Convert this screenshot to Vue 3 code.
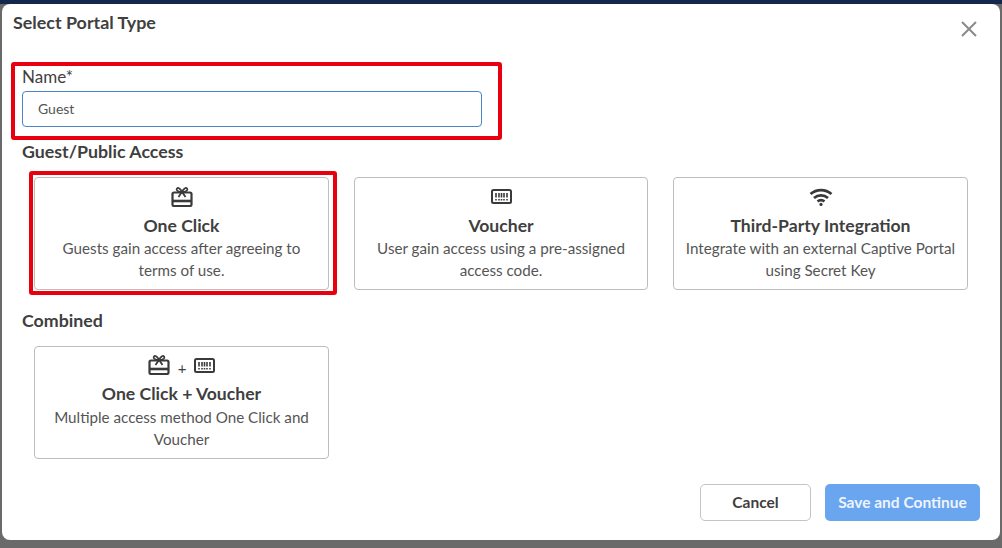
<script setup>
const access = [
  { title: 'One Click', icons: ['gift'], lines: 'Guests gain access after agreeing to terms of use.', marked: true },
  { title: 'Voucher', icons: ['keys'], lines: 'User gain access using a pre-assigned access code.' },
  { title: 'Third-Party Integration', icons: ['wifi'], lines: 'Integrate with an external Captive Portal using Secret Key' }
]
const combined = [
  { title: 'One Click + Voucher', icons: ['gift', 'keys'], lines: 'Multiple access method One Click and Voucher' }
]
const sections = [
  { name: 'Guest/Public Access', cards: access },
  { name: 'Combined', cards: combined }
]
</script>

<template>
  <div class="page">
    <div class="modal">
      <header class="head">
        <h1>Select Portal Type</h1>
        <svg class="close" width="16" height="16" viewBox="0 0 16 16"><path d="M1 1l14 14M15 1L1 15" stroke="#8a8a8a" stroke-width="2" fill="none"/></svg>
      </header>

      <div class="field">
        <label>Name*</label>
        <div class="input">Guest</div>
        <span class="mark"></span>
      </div>

      <section v-for="s in sections" :key="s.name" class="section">
        <h2>{{ s.name }}</h2>
        <div class="grid">
          <div v-for="c in s.cards" :key="c.title" class="card">
            <div class="icons" :class="{ pair: c.icons.length > 1 }">
              <template v-for="(i, n) in c.icons" :key="i">
                <span v-if="n" class="plus">+</span>
                <svg v-if="i === 'gift'" width="22" height="20" viewBox="0 0 22 20" fill="none" stroke="#3a3a3a" stroke-width="2.2">
                  <rect x="1.5" y="5.5" width="19" height="13.5" rx="1.5"/>
                  <path d="M1.5 14h19" stroke-width="2.6"/>
                  <path d="M11 5C9.5 1.5 7 0.2 6 1.5 4.8 3.2 7 5 11 5.2 15 5 17.2 3.2 16 1.5 15 0.2 12.5 1.5 11 5Z" stroke-width="1.7"/>
                  <path d="M10.5 5.5L7.5 10M11.5 5.5l3 4.5" stroke-width="1.8"/>
                </svg>
                <svg v-else-if="i === 'keys'" width="21" height="15" viewBox="0 0 21 15" fill="none" stroke="#3a3a3a">
                  <rect x="1" y="1" width="19" height="13" rx="1.5" stroke-width="2"/>
                  <path d="M5 4v4.5M8 4v4.5M10.5 4v4.5M13 4v4.5M16 4v4.5M5 10v1.5M8 10v1.5M10.5 10v1.5M13 10v1.5M16 10v1.5" stroke-width="1.6"/>
                </svg>
                <svg v-else width="24" height="18" viewBox="0 0 24 18" fill="none" stroke="#3a3a3a" stroke-width="2.8">
                  <path d="M1.5 6C7.5 0.8 16.5 0.8 22.5 6"/>
                  <path d="M5 10c4-3.4 10-3.4 14 0"/>
                  <path d="M8.5 13.4c2.2-1.6 4.8-1.6 7 0"/>
                  <circle cx="12" cy="16.4" r="1.6" fill="#3a3a3a" stroke="none"/>
                </svg>
              </template>
            </div>
            <h3>{{ c.title }}</h3>
            <p>{{ c.lines }}</p>
            <span v-if="c.marked" class="mark card-mark"></span>
          </div>
        </div>
      </section>

      <footer class="foot">
        <button class="cancel">Cancel</button>
        <button class="save">Save and Continue</button>
      </footer>
    </div>
  </div>
</template>

<style>
html, body { margin: 0; background: #6a6a6a; }
</style>

<style scoped>
.page {
  width: 1002px;
  height: 548px;
  box-sizing: border-box;
  padding: 4px 2px 8px;
  background: linear-gradient(#14284b 0 4px, #6a6a6a 4px);
  font-family: Lato, "Open Sans", sans-serif;
  color: #3f3f3f;
  overflow: hidden;
}
.modal {
  height: 536px;
  background: #fff;
  border-radius: 8px;
  box-sizing: border-box;
  display: flex;
  flex-direction: column;
  position: relative;
}
.head {
  display: flex;
  justify-content: space-between;
  padding: 8px 23px 0 11px;
  height: 60px;
  box-sizing: border-box;
}
h1 { margin: 0; font-size: 17.9px; line-height: 20px; font-weight: 700; }
.close { margin-top: 9px; }
.field {
  position: relative;
  margin-left: 20px;
  width: 460px;
  height: 63px;
}
label { display: block; font-size: 17px; line-height: 26px; }
.input {
  height: 36px;
  margin-top: 1px;
  box-sizing: border-box;
  border: 1px solid #4a86c5;
  border-radius: 4px;
  padding-left: 15px;
  font-size: 14px;
  line-height: 34px;
  color: #555;
}
.mark {
  position: absolute;
  inset: -2px -20px -13px -11px;
  border: 4px solid #e8000f;
  border-radius: 3px;
  pointer-events: none;
}
.section { margin-left: 20px; }
h2 { margin: 0; font-size: 17.8px; line-height: 20px; font-weight: 700; }
.section:first-of-type { margin-top: 14px; }
.section + .section { margin-top: 20px; }
.grid {
  display: grid;
  grid-template-columns: 295px 294px 295px;
  gap: 25px;
  margin: 16px 0 0 12px;
}
.card {
  position: relative;
  height: 113px;
  box-sizing: border-box;
  border: 1px solid #bdbdbd;
  border-radius: 4px;
  padding: 0 8px;
  text-align: center;
}
.card-mark { inset: -7px -9px -6px -6px; }
.icons {
  height: 37px;
  display: flex;
  align-items: center;
  justify-content: center;
  gap: 8px;
}
.icons.pair { height: 36px; }
.icons.pair + h3 { margin-bottom: 1px; }
.plus { font-size: 15px; margin-top: 6px; }
h3 { margin: 0; font-size: 17.6px; line-height: 22px; font-weight: 700; }
p { margin: 0; font-size: 15.2px; line-height: 22px; color: #555; }
.foot {
  margin-top: auto;
  display: flex;
  justify-content: flex-end;
  gap: 14px;
  padding: 0 20px 19px 0;
}
button {
  height: 37px;
  border-radius: 5px;
  font: 700 15.5px Lato, "Open Sans", sans-serif;
  box-sizing: border-box;
  padding: 0 0 2px;
}
.cancel { width: 111px; background: #fff; border: 1px solid #c4c4c4; color: #3f3f3f; }
.save { width: 155px; background: #6aa5f0; border: 0; color: #edf4fd; }
</style>
